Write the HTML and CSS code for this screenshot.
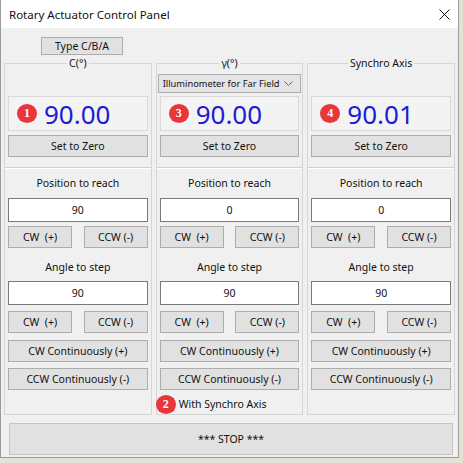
FILE: index.html
```html
<!DOCTYPE html>
<html lang="en">

<head>
    <meta charset="UTF-8">
    <meta name="viewport" content="width=device-width, initial-scale=1.0">
    <title>Rotary Actuator Control Panel</title>
    <link rel="stylesheet" href="styles.css">
</head>

<body>
    <div class="window">
        <div class="titlebar">
            <span>Rotary Actuator Control Panel</span>
            <svg class="close" width="11" height="11" viewBox="0 0 11 11">
                <path d="M0.5 0.5 L10.5 10.5 M10.5 0.5 L0.5 10.5" stroke="#111" stroke-width="1" fill="none" />
            </svg>
        </div>
        <div class="client">
            <button type="button" class="btn type-btn">Type C/B/A</button>

            <div class="groups">
                <!-- C axis -->
                <fieldset class="group">
                    <legend>C(°)</legend>
                    <div class="combo-slot"></div>
                    <div class="readout"><span class="badge">1</span><span class="value">90.00</span></div>
                    <button type="button" class="btn">Set to Zero</button>
                    <div class="sep"></div>
                    <div class="caption">Position to reach</div>
                    <input type="text" class="field" value="90">
                    <div class="pair">
                        <button type="button" class="btn">CW&nbsp; (+)</button>
                        <button type="button" class="btn">CCW (-)</button>
                    </div>
                    <div class="caption">Angle to step</div>
                    <input type="text" class="field field-step" value="90">
                    <div class="pair">
                        <button type="button" class="btn">CW&nbsp; (+)</button>
                        <button type="button" class="btn">CCW (-)</button>
                    </div>
                    <button type="button" class="btn cont">CW Continuously (+)</button>
                    <button type="button" class="btn cont">CCW Continuously (-)</button>
                </fieldset>

                <!-- gamma axis -->
                <fieldset class="group">
                    <legend>γ(°)</legend>
                    <div class="combo">
                        <span class="combo-text">Illuminometer for Far Field</span>
                        <svg width="9" height="5" viewBox="0 0 9 5">
                            <path d="M0.5 0.5 L4.5 4.5 L8.5 0.5" stroke="#666" stroke-width="1" fill="none" />
                        </svg>
                    </div>
                    <div class="readout"><span class="badge">3</span><span class="value">90.00</span></div>
                    <button type="button" class="btn">Set to Zero</button>
                    <div class="sep"></div>
                    <div class="caption">Position to reach</div>
                    <input type="text" class="field" value="0">
                    <div class="pair">
                        <button type="button" class="btn">CW&nbsp; (+)</button>
                        <button type="button" class="btn">CCW (-)</button>
                    </div>
                    <div class="caption">Angle to step</div>
                    <input type="text" class="field field-step" value="90">
                    <div class="pair">
                        <button type="button" class="btn">CW&nbsp; (+)</button>
                        <button type="button" class="btn">CCW (-)</button>
                    </div>
                    <button type="button" class="btn cont">CW Continuously (+)</button>
                    <button type="button" class="btn cont">CCW Continuously (-)</button>
                    <label class="sync">
                        <span class="check"><span class="badge badge-over">2</span></span>
                        With Synchro Axis
                    </label>
                </fieldset>

                <!-- synchro axis -->
                <fieldset class="group">
                    <legend>Synchro Axis</legend>
                    <div class="combo-slot"></div>
                    <div class="readout"><span class="badge">4</span><span class="value">90.01</span></div>
                    <button type="button" class="btn">Set to Zero</button>
                    <div class="sep"></div>
                    <div class="caption">Position to reach</div>
                    <input type="text" class="field" value="0">
                    <div class="pair">
                        <button type="button" class="btn">CW&nbsp; (+)</button>
                        <button type="button" class="btn">CCW (-)</button>
                    </div>
                    <div class="caption">Angle to step</div>
                    <input type="text" class="field field-step" value="90">
                    <div class="pair">
                        <button type="button" class="btn">CW&nbsp; (+)</button>
                        <button type="button" class="btn">CCW (-)</button>
                    </div>
                    <button type="button" class="btn cont">CW Continuously (+)</button>
                    <button type="button" class="btn cont">CCW Continuously (-)</button>
                </fieldset>
            </div>

            <button type="button" class="btn stop">*** STOP ***</button>
        </div>
    </div>
</body>

</html>
```

FILE: styles.css
```css
* {
    box-sizing: border-box;
}

body {
    margin: 0;
    background-color: #e4e2d4;
    font-family: 'Noto Sans', 'Segoe UI', Tahoma, sans-serif;
    font-size: 10.5px;
    color: #111;
}

.window {
    width: 459px;
    height: 458px;
    display: flex;
    flex-direction: column;
    background-color: #f0f0f0;
    border: 1px solid #9c9c9c;
    border-top: none;
}

.titlebar {
    height: 28px;
    display: flex;
    align-items: center;
    justify-content: space-between;
    padding: 0 8px 0 8px;
    background: white;
    font-size: 11.5px;
}

.client {
    flex: 1;
    display: flex;
    flex-direction: column;
    padding: 9px 3px 0;
}

.btn {
    font: inherit;
    color: #111;
    height: 22px;
    padding: 0;
    background-color: #e1e1e1;
    border: 1px solid #adadad;
}

.type-btn {
    width: 82px;
    height: 18px;
    margin-left: 37px;
}

.groups {
    display: grid;
    grid-template-columns: repeat(3, 1fr);
    gap: 4px;
    margin-top: 1px;
}

.group {
    min-width: 0;
    margin: 0;
    padding: 4px 3px 2px;
    border: 1px solid #d6d6d6;
    display: flex;
    flex-direction: column;
}

.group legend {
    margin: 0 auto;
    padding: 0 2px;
    line-height: 14px;
}

.combo-slot {
    height: 19px;
}

.combo {
    height: 19px;
    margin: 0 -2px;
    display: flex;
    align-items: center;
    justify-content: space-between;
    padding: 0 7px 0 4px;
    background-color: #e5e5e5;
    border: 1px solid #acacac;
}

.combo-text {
    white-space: nowrap;
    font-size: 9.3px;
}

.readout {
    height: 35px;
    margin-top: 3px;
    display: flex;
    align-items: center;
    gap: 7px;
    padding-left: 8px;
    background-color: #f3f3f3;
    border: 1px solid #d9d9d9;
}

.value {
    font-size: 26px;
    line-height: 1;
    color: #1c1cd4;
}

.badge {
    width: 20px;
    height: 19px;
    border-radius: 50%;
    display: inline-flex;
    align-items: center;
    justify-content: center;
    background-color: #e8363a;
    color: white;
    font-family: 'Liberation Serif', serif;
    font-size: 12px;
    font-weight: bold;
}

.readout + .btn {
    margin-top: 4px;
}

.sep {
    margin: 10px -3px 0;
    border-top: 1px solid #d0d0d0;
    border-bottom: 1px solid #fff;
}

.caption {
    text-align: center;
    line-height: 16px;
    margin-top: 6px;
}

.pair + .caption {
    margin-top: 11px;
}

.field {
    font: inherit;
    color: #111;
    height: 24px;
    margin-top: 7px;
    text-align: center;
    background: white;
    border: 1px solid #7a7a7a;
    outline: none;
}

.field-step {
    margin-top: 6px;
}

.pair {
    display: flex;
    justify-content: space-between;
    margin-top: 4px;
}

.field-step + .pair {
    margin-top: 6px;
}

.pair .btn {
    width: 64px;
}

.cont {
    margin-top: 7px;
}

.cont + .cont {
    margin-top: 6px;
}

.sync {
    display: flex;
    align-items: center;
    gap: 5px;
    height: 16px;
    margin-top: 6px;
    padding-left: 1px;
}

.check {
    position: relative;
    width: 13px;
    height: 13px;
    background: white;
    border: 1px solid #333;
}

.badge-over {
    position: absolute;
    left: -6px;
    top: -4px;
}

.stop {
    height: 32px;
    margin: 8px 0 0 5px;
    width: 444px;
    border-color: #c4c4c4;
}
```
